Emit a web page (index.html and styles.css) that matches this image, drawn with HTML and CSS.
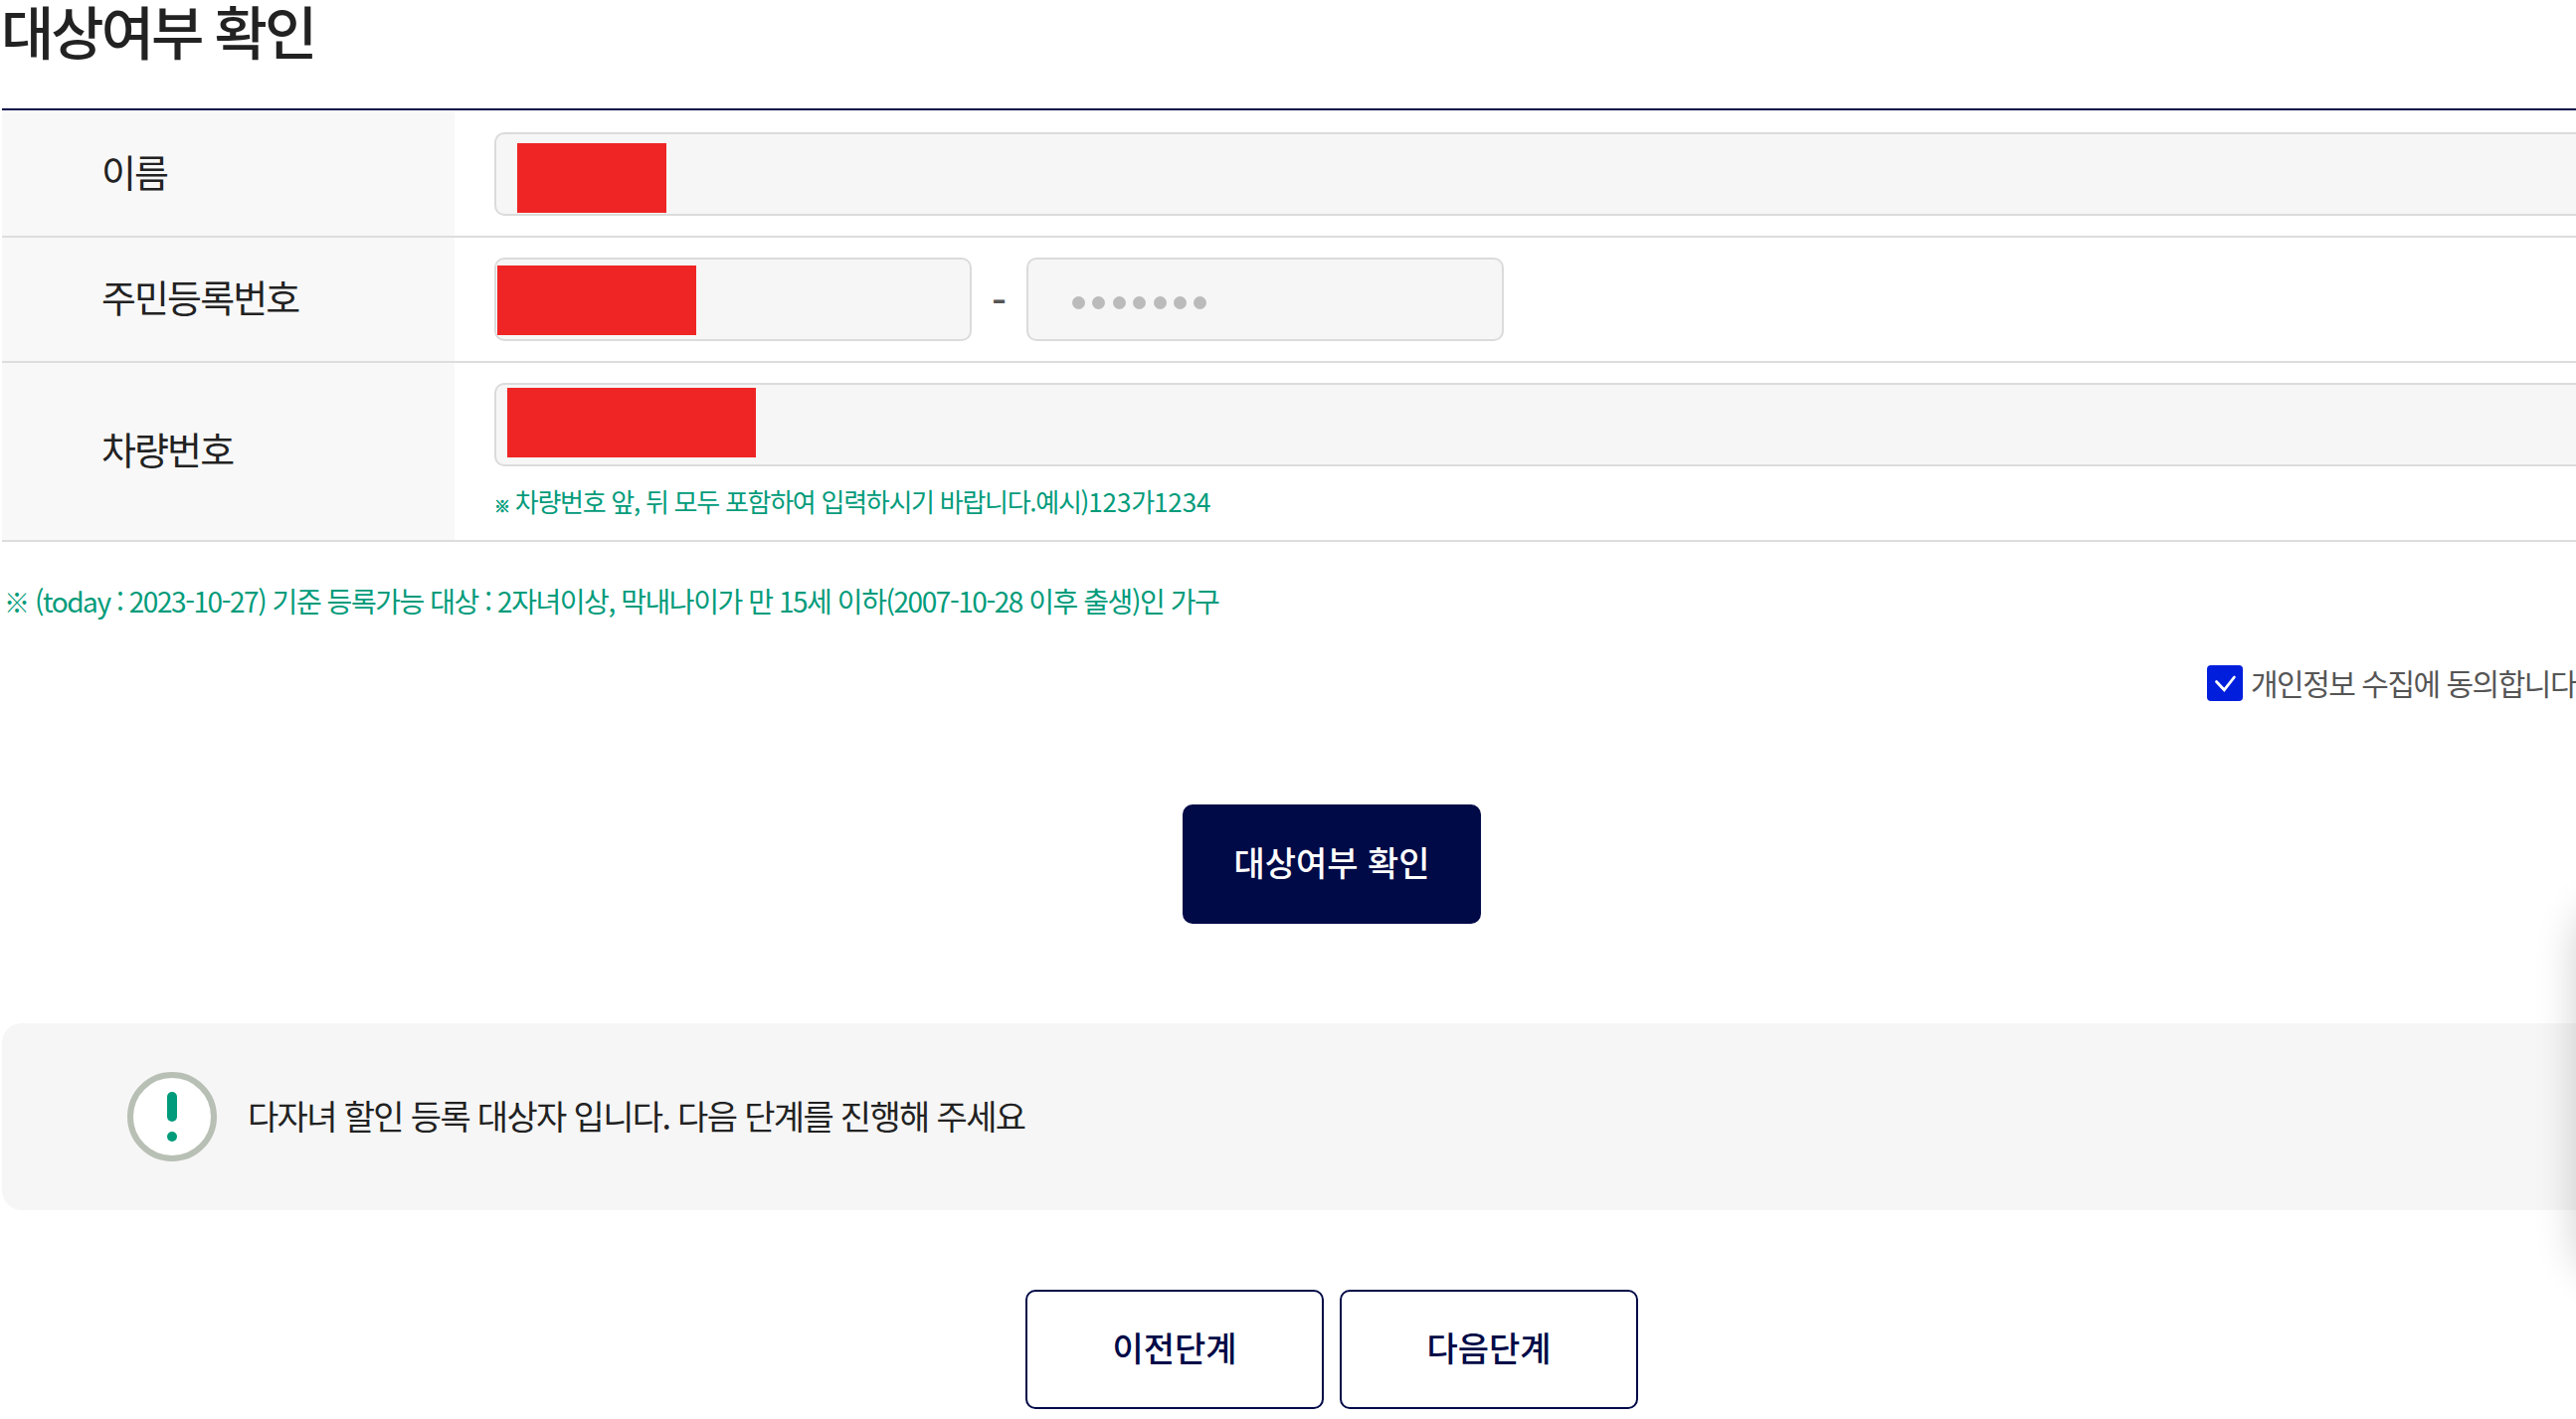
FILE: index.html
```
<!DOCTYPE html>
<html lang="ko">
<head>
    <meta charset="UTF-8">
    <title>대상여부 확인</title>
    <link rel="stylesheet" href="styles.css">
</head>
<body>
<div class="container">
    <h2 class="title">대상여부 확인</h2>

    <!-- Applicant form -->
    <div class="form-table">
        <div class="row">
            <div class="label">이름</div>
            <div class="cell">
                <div class="field"><span class="mask mask-name"></span></div>
            </div>
        </div>
        <div class="row">
            <div class="label">주민등록번호</div>
            <div class="cell id-number">
                <div class="field field-half"><span class="mask mask-id"></span></div>
                <span class="dash">-</span>
                <div class="field field-half dots">
                    <i></i><i></i><i></i><i></i><i></i><i></i><i></i>
                </div>
            </div>
        </div>
        <div class="row">
            <div class="label">차량번호</div>
            <div class="cell">
                <div class="field"><span class="mask mask-car"></span></div>
                <p class="hint"><span class="mark">※</span> 차량번호 앞, 뒤 모두 포함하여 입력하시기 바랍니다.예시)<span class="num">123</span>가<span class="num">1234</span></p>
            </div>
        </div>
    </div>

    <p class="guide"><span class="mark">※</span> (today : 2023-10-27) 기준 등록가능 대상 : 2자녀이상, 막내나이가 만 15세 이하(2007-10-28 이후 출생)인 가구</p>

    <div class="agree">
        <span class="checkbox">
            <svg width="36" height="36" viewBox="0 0 36 36">
                <path d="M9.5 16.5 L17.3 24.8 L27.4 12" fill="none" stroke="#fff" stroke-width="2.8" stroke-linecap="round"/>
            </svg>
        </span>
        <span class="agree-text">개인정보 수집에 동의합니다.</span>
    </div>

    <div class="buttons">
        <button type="button" class="btn btn-primary">대상여부 확인</button>
    </div>

    <!-- Result message -->
    <div class="notice">
        <svg class="notice-icon" width="90" height="90" viewBox="0 0 90 90">
            <circle cx="45" cy="45" r="42" fill="#fff" stroke="#b8bfb4" stroke-width="6"/>
            <rect x="40" y="20" width="10" height="30" rx="5" fill="#009b7a"/>
            <circle cx="45" cy="65" r="5" fill="#009b7a"/>
        </svg>
        <p class="notice-text">다자녀 할인 등록 대상자 입니다. 다음 단계를 진행해 주세요</p>
    </div>

    <div class="buttons steps">
        <button type="button" class="btn">이전단계</button>
        <button type="button" class="btn">다음단계</button>
    </div>
</div>

<!-- Quick menu, sits past the right edge -->
<div class="quick-menu"></div>
</body>
</html>
```
FILE: styles.css
```
body {
    font-family: "Noto Sans CJK KR", sans-serif;
    margin: 0;
    padding: 0;
    height: 1427px;
    overflow: hidden;
    position: relative;
    background-color: #fff;
    color: #222;
}

.container {
    width: 2674px;
    margin-left: 2px;
}

.title {
    margin: 0 0 0 -1px;
    height: 109px;
    line-height: 60px;
    font-size: 58px;
    font-weight: 500;
    letter-spacing: -0.052em;
}

/* Form table */
.form-table {
    border-top: 2px solid #000a47;
    padding-top: 2px;
}

.row {
    display: flex;
    border-bottom: 2px solid #ddd;
}

.label {
    display: flex;
    align-items: center;
    width: 455px;
    padding: 0 0 7px 100px;
    box-sizing: border-box;
    background-color: #f8f8f8;
    font-size: 38px;
    letter-spacing: -0.05em;
}

.cell {
    flex: 1;
    padding: 20px 40px;
}

.field {
    display: flex;
    align-items: flex-start;
    height: 84px;
    box-sizing: border-box;
    border: 2px solid #dbdbdb;
    border-radius: 10px;
    background-color: #f6f6f6;
}

.id-number {
    display: flex;
}

.field-half {
    width: 480px;
}

.dash {
    width: 55px;
    height: 84px;
    line-height: 84px;
    text-align: center;
    font-size: 42px;
    font-weight: 500;
    color: #555;
}

.dots {
    align-items: center;
    gap: 7.4px;
    padding: 7px 0 0 44px;
}

.dots i {
    width: 13px;
    height: 13px;
    border-radius: 50%;
    background-color: #bbb;
}

.mask {
    height: 70px;
    background-color: #ef2525;
}

.mask-name {
    width: 150px;
    margin: 9px 0 0 21px;
}

.mask-id {
    width: 200px;
    margin: 6px 0 0 1px;
}

.mask-car {
    width: 250px;
    margin: 3px 0 0 11px;
}

.hint {
    margin: 15px 0 -1px;
    height: 40px;
    line-height: 40px;
    font-size: 26px;
    letter-spacing: -0.049em;
    color: #009b7a;
    white-space: nowrap;
}

.hint .mark {
    font-size: 16px;
    font-weight: bold;
    -webkit-text-stroke: 0.6px #009b7a;
}

.hint .num {
    letter-spacing: -0.002em;
}

.guide {
    margin: 39px 0 0 2px;
    height: 40px;
    line-height: 40px;
    font-size: 28px;
    letter-spacing: -0.0515em;
    color: #009b7a;
    white-space: nowrap;
}

.guide .mark {
    font-size: 26px;
}

/* Agreement */
.agree {
    display: flex;
    align-items: center;
    height: 36px;
    margin-top: 45px;
    padding-left: 2217px;
}

.checkbox {
    width: 36px;
    height: 36px;
    border-radius: 4px;
    background-color: #001edc;
}

.agree-text {
    margin-left: 8px;
    padding-bottom: 3px;
    font-size: 30px;
    letter-spacing: -0.05em;
    color: #555;
    white-space: nowrap;
}

/* Buttons */
.buttons {
    display: flex;
    justify-content: center;
    gap: 16px;
    margin-top: 104px;
}

.btn {
    width: 300px;
    height: 120px;
    padding: 0 0 6px;
    border: 2px solid #000a47;
    border-radius: 10px;
    background-color: #fff;
    font-family: inherit;
    font-size: 34px;
    font-weight: 500;
    letter-spacing: 0;
    color: #000a47;
}

.btn-primary {
    background-color: #000a47;
    color: #fff;
}

.steps {
    margin-top: 80px;
}

/* Notice */
.notice {
    display: flex;
    align-items: center;
    height: 188px;
    margin-top: 100px;
    padding-left: 126px;
    box-sizing: border-box;
    border-radius: 20px;
    background-color: #f6f6f6;
}

.notice-text {
    margin: 0 0 0 31px;
    padding-bottom: 4px;
    font-size: 34px;
    letter-spacing: -0.049em;
}

.quick-menu {
    position: absolute;
    top: 910px;
    left: 2592px;
    width: 160px;
    height: 375px;
    border-radius: 40px;
    background-color: #fff;
    box-shadow: 0 0 44px rgba(0, 0, 0, 0.2);
}
```
